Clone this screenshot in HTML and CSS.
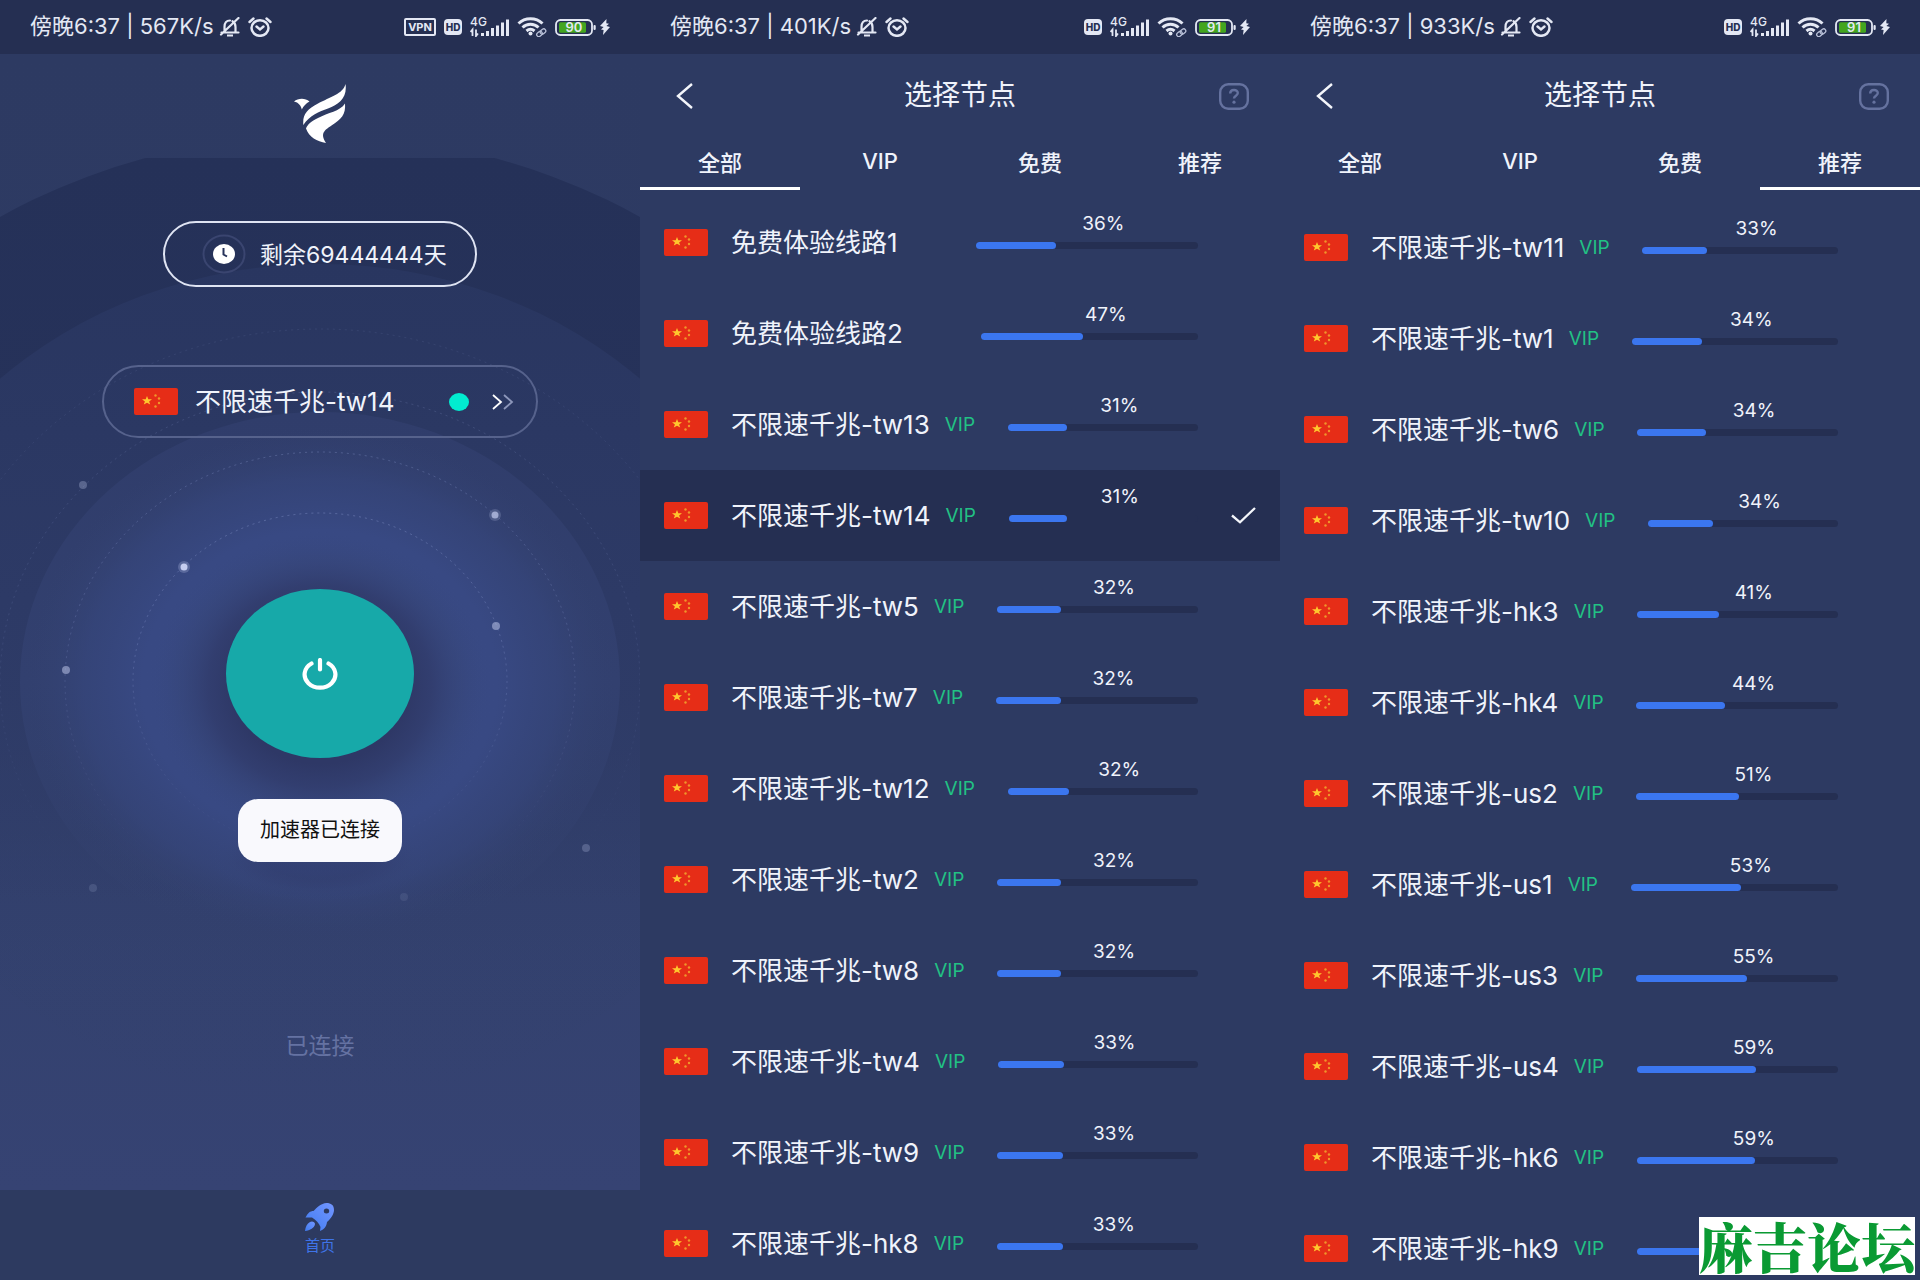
FILE: index.html
```html
<!DOCTYPE html>
<html lang="zh-CN">
<head>
<meta charset="utf-8">
<meta name="viewport" content="width=device-width, initial-scale=1">
<title>选择节点</title>
<link rel="stylesheet" href="styles.css">
</head>
<body>
<svg class="sprite" aria-hidden="true">
  <symbol id="flag" viewBox="0 0 44 27">
    <rect width="44" height="27" rx="2" fill="#e62d17"/>
    <path d="M13 8l1.300 3.200 3.700.1-2.900 2.100 1.100 3.200-3.200-1.900-3.200 1.900 1.100-3.200L8 11.300l3.700-.1z" fill="#ffc72e"/>
    <g fill="#f0962a"><circle cx="21.500" cy="7.500" r="1.200"/><circle cx="25" cy="10.500" r="1.200"/><circle cx="25" cy="15" r="1.200"/><circle cx="21.500" cy="18.500" r="1.200"/></g>
  </symbol>
  <symbol id="bell" viewBox="0 0 22 20">
    <path d="M2.500 15.500h17M5.500 15V10c0-4 2-6.500 5.500-6.500M13.500 4.200C15.600 5.300 16.500 7.400 16.500 10v5M19.500 1 2 17.500" fill="none" stroke="#e4e8f4" stroke-width="2.200" stroke-linecap="round"/>
    <path d="M8 18.500h6" stroke="#e4e8f4" stroke-width="2"/>
  </symbol>
  <symbol id="alarm" viewBox="0 0 24 20">
    <ellipse cx="12" cy="11" rx="8.500" ry="7.800" fill="none" stroke="#e4e8f4" stroke-width="2.500"/>
    <path d="M1.500 5 5.500 1.500M22.500 5l-4-3.500M8.500 9.500 12 12.500l3.500-3" fill="none" stroke="#e4e8f4" stroke-width="2.400" stroke-linecap="round"/>
  </symbol>
  <symbol id="signal" viewBox="0 0 39 20">
    <path d="M2.500 19v-6.500l-2 2.500M6 12.500v6.500l2-2.500" fill="none" stroke="#e4e8f4" stroke-width="1.800"/>
    <path d="M12.500 19v-3M17.500 19v-5M22.500 19v-8M27.500 19V8.500M32.500 19V5.500M37.500 19V2.500" stroke="#e4e8f4" stroke-width="3"/>
  </symbol>
  <symbol id="wifi" viewBox="0 0 30 20">
    <path d="M1.500 6.500C8 .2 19 .2 25.500 6.500M5.500 10.500c4.500-4.200 11.500-4.200 16 0M9.500 14c2.500-2.200 5.500-2.200 8 0" fill="none" stroke="#e4e8f4" stroke-width="3"/>
    <circle cx="13.500" cy="16.500" r="2" fill="#e4e8f4"/>
    <g fill="none" stroke="#b9c0d8" stroke-width="1.300"><rect x="19.500" y="15" width="6" height="4" rx="2" transform="rotate(-40 22.500 17)"/><rect x="23" y="12.500" width="6" height="4" rx="2" transform="rotate(-40 26 14.500)"/></g>
  </symbol>
  <symbol id="battery" viewBox="0 0 42 17">
    <rect x="1" y="1" width="36" height="15" rx="4.500" fill="none" stroke="#e4e8f4" stroke-width="1.800"/>
    <rect x="38.500" y="6" width="2.200" height="5" rx="1" fill="#e4e8f4"/>
    <rect x="4" y="3.200" width="27" height="10.600" rx="1.500" fill="#43a51f"/>
  </symbol>
  <symbol id="bolt" viewBox="0 0 10 16">
    <path d="M6.500 0 0 7l3.600 1L1 10.500l2.600.5L3 16l7-8-3.600-1L9 4.800 6.300 4.200z" fill="#e4e8f4"/>
  </symbol>
  <symbol id="back" viewBox="0 0 18 28">
    <path d="M16 2 2 14l14 12" fill="none" stroke="#f4f6fb" stroke-width="2.400"/>
  </symbol>
  <symbol id="help" viewBox="0 0 30 27">
    <rect x="1.200" y="1.200" width="27.600" height="24.600" rx="8" fill="none" stroke="#65729f" stroke-width="2.400"/>
    <path d="M11.200 10.500c0-4.600 7.600-4.600 7.600-.4 0 2.600-3.800 2.600-3.800 5.400" fill="none" stroke="#65729f" stroke-width="2.400"/>
    <circle cx="15" cy="19.200" r="1.600" fill="#65729f"/>
  </symbol>
  <symbol id="check" viewBox="0 0 25 17">
    <path d="M1 8.500 9 15.300 24 1" fill="none" stroke="#f4f6fb" stroke-width="2.300"/>
  </symbol>
</svg>

<div class="screens">
  <section class="phone home">
    <header class="status">
      <span class="status-text">傍晚6:37 | 567K/s</span>
      <svg class="bell"><use href="#bell"/></svg><svg class="alarm"><use href="#alarm"/></svg>
      <div class="status-icons">
        <b class="vpn">VPN</b><b class="hd">HD</b><span class="signal"><svg><use href="#signal"/></svg><i>4G</i></span><svg class="wifi"><use href="#wifi"/></svg>
        <span class="battery"><svg><use href="#battery"/></svg><b>90</b></span><svg class="bolt"><use href="#bolt"/></svg>
      </div>
    </header>
    <main class="stage">
      <svg class="sky" viewBox="0 54 640 1137" preserveAspectRatio="xMidYMin slice" aria-hidden="true">
        <defs>
          <linearGradient id="far" gradientUnits="userSpaceOnUse" x1="0" y1="158" x2="0" y2="900"><stop offset="0" stop-color="#253158"/><stop offset=".35" stop-color="#26325a"/><stop offset="1" stop-color="#26325a" stop-opacity="0"/></linearGradient>
          <linearGradient id="mid" gradientUnits="userSpaceOnUse" x1="0" y1="264" x2="0" y2="1100"><stop offset="0" stop-color="#293660"/><stop offset=".4" stop-color="#2d3a66"/><stop offset="1" stop-color="#34426f" stop-opacity="0"/></linearGradient>
          <linearGradient id="near" gradientUnits="userSpaceOnUse" x1="0" y1="412" x2="0" y2="952"><stop offset="0" stop-color="#303d6b"/><stop offset=".5" stop-color="#32406f"/><stop offset="1" stop-color="#34426f" stop-opacity="0"/></linearGradient>
          <linearGradient id="orbit" gradientUnits="userSpaceOnUse" x1="0" y1="400" x2="0" y2="860"><stop offset="0" stop-color="#9aa9de"/><stop offset=".5" stop-color="#8c9bd2" stop-opacity=".8"/><stop offset="1" stop-color="#8c9bd2" stop-opacity="0"/></linearGradient>
          <radialGradient id="glow"><stop offset="0" stop-color="#394a85"/><stop offset=".6" stop-color="#384983"/><stop offset=".8" stop-color="#36467c" stop-opacity=".7"/><stop offset="1" stop-color="#33416f" stop-opacity="0"/></radialGradient>
          <radialGradient id="shade"><stop offset=".5" stop-color="#2e3866"/><stop offset=".65" stop-color="#313c6c" stop-opacity=".85"/><stop offset=".82" stop-color="#354476" stop-opacity=".45"/><stop offset="1" stop-color="#384983" stop-opacity="0"/></radialGradient>
          <clipPath id="below"><rect x="0" y="158" width="640" height="1033"/></clipPath>
        </defs>
        <g clip-path="url(#below)">
          <ellipse cx="320" cy="682" rx="608" ry="547" fill="url(#far)"/>
          <ellipse cx="320" cy="682" rx="465" ry="418" fill="url(#mid)"/>
          <ellipse cx="320" cy="682" rx="300" ry="270" fill="url(#near)"/>
          <ellipse cx="320" cy="684" rx="296" ry="256" fill="url(#glow)"/>
          <ellipse cx="320" cy="686" rx="172" ry="156" fill="url(#shade)"/>
          <ellipse cx="320" cy="858" rx="110" ry="44" fill="url(#shade)" opacity=".35"/>
        </g>
        <g fill="none" stroke="url(#orbit)" stroke-dasharray="2 4">
          <ellipse cx="320" cy="681" rx="187" ry="168" opacity=".4"/>
          <ellipse cx="320" cy="682" rx="255" ry="230" opacity=".3"/>
          <ellipse cx="320" cy="682" rx="320" ry="290" opacity=".18"/>
          <ellipse cx="320" cy="682" rx="390" ry="353" opacity=".1"/>
        </g>
        <g fill="#c5cdf0">
          <circle cx="83" cy="485" r="4" opacity=".3"/>
          <circle cx="184" cy="567" r="6" opacity=".25"/><circle cx="184" cy="567" r="3.500"/>
          <circle cx="495" cy="515" r="6" opacity=".2"/><circle cx="495" cy="515" r="3.500" opacity=".7"/>
          <circle cx="496" cy="626" r="4" opacity=".5"/>
          <circle cx="66" cy="670" r="4" opacity=".5"/>
          <circle cx="93" cy="888" r="4" opacity=".15"/>
          <circle cx="404" cy="897" r="4" opacity=".1"/>
          <circle cx="586" cy="848" r="4" opacity=".25"/>
        </g>
      </svg>
      <svg class="logo" viewBox="0 0 52 59" role="img" aria-label="logo">
        <g fill="#fff"><path d="M0 17.500C4 14 11 13.500 15.500 17.500 12 19.500 9.500 22 7.800 25.500 7 21.500 4.500 18.500 0 17.500z"/>
        <path d="M51.500 0C49 10 36 13 24 19.500 13 25.500 8.500 30 9.300 41 16 31 25 27.500 34 24.500 45 20.500 53.500 13.500 51.500 0z"/>
        <path d="M51 19.500C46 27.500 34 28.500 24 34 17 37.500 13.500 40.500 12 44.500 15 53 23 57.500 32 59 26 49.500 30 46.500 37.500 41.500 47 35.500 52 30.500 51 19.500z"/></g>
      </svg>
      <button class="pill remaining" type="button">
        <svg class="clock" viewBox="0 0 44 40"><ellipse cx="22" cy="20" rx="20.500" ry="18.500" fill="none" stroke="#3a4570" stroke-width="2"/><ellipse cx="22" cy="20" rx="11" ry="10" fill="#fff"/><path d="M21.500 14v6.500l3.500 2" fill="none" stroke="#26325a" stroke-width="2"/></svg>
        <span class="caption">剩余69444444天</span>
      </button>
      <button class="pill current" type="button">
        <svg class="flag"><use href="#flag"/></svg>
        <span class="current-name">不限速千兆-tw14</span>
        <i class="online"></i>
        <svg class="more" viewBox="0 0 22 16"><path d="m1 1 8 7-8 7" fill="none" stroke="#fff" stroke-width="1.800"/><path d="m12 1 8 7-8 7" fill="none" stroke="#8d97bb" stroke-width="1.800"/></svg>
      </button>
      <button class="power" type="button" aria-label="断开连接">
        <svg viewBox="0 0 36 32"><path d="M9.500 5.500A15.400 13.200 0 1 0 26.500 5.500M18 2v9.500" fill="none" stroke="#fff" stroke-width="4.200" stroke-linecap="round"/></svg>
      </button>
      <div class="toast" role="status">加速器已连接</div>
      <p class="state">已连接</p>
    </main>
    <nav class="dock">
      <a href="#home">
        <svg viewBox="0 0 30 28"><defs><linearGradient id="rk" x1="1" y1="0" x2="0" y2="1"><stop offset="0" stop-color="#7396ff"/><stop offset="1" stop-color="#3f7bf0"/></linearGradient></defs>
        <path fill-rule="evenodd" fill="url(#rk)" d="M29 7C29 2 26 0 21.500 0 16 .3 12 4.500 8.500 8 5 8 3 10 .5 14.500L7 14.500C11 17 14 20 15.500 24l-.5 4c4.500-2 6.500-4.500 7-9C26 15.500 29 11 29 7zM21.500 5.500a2.600 2.400 0 1 1 0 5 2.600 2.400 0 0 1 0-5z"/>
        <path fill="url(#rk)" d="M5 19c2-1.500 5 0 5 2C9.500 25 5 27.500 0 28c.5-4 2-7.500 5-9z"/></svg>
        <span>首页</span>
      </a>
    </nav>
  </section>

  <section class="phone">
    <header class="status">
      <span class="status-text">傍晚6:37 | 401K/s</span>
      <svg class="bell"><use href="#bell"/></svg><svg class="alarm"><use href="#alarm"/></svg>
      <div class="status-icons">
        <b class="hd">HD</b><span class="signal"><svg><use href="#signal"/></svg><i>4G</i></span><svg class="wifi"><use href="#wifi"/></svg>
        <span class="battery"><svg><use href="#battery"/></svg><b>91</b></span><svg class="bolt"><use href="#bolt"/></svg>
      </div>
    </header>
    <div class="titlebar">
      <button type="button" class="back" aria-label="返回"><svg><use href="#back"/></svg></button>
      <h1>选择节点</h1>
      <button type="button" class="help" aria-label="帮助"><svg><use href="#help"/></svg></button>
    </div>
    <div class="tabs" role="tablist">
      <button type="button" role="tab" class="tab active" aria-selected="true">全部</button>
      <button type="button" role="tab" class="tab">VIP</button>
      <button type="button" role="tab" class="tab">免费</button>
      <button type="button" role="tab" class="tab">推荐</button>
    </div>
    <ul class="nodes">
      <li><button type="button" class="node"><svg class="flag"><use href="#flag"/></svg><span class="name">免费体验线路1</span><span class="tag"></span><span class="load"><span class="value">36%</span><span class="track"><span class="fill" style="width:36%"></span></span></span></button></li>
      <li><button type="button" class="node"><svg class="flag"><use href="#flag"/></svg><span class="name">免费体验线路2</span><span class="tag"></span><span class="load"><span class="value">47%</span><span class="track"><span class="fill" style="width:47%"></span></span></span></button></li>
      <li><button type="button" class="node"><svg class="flag"><use href="#flag"/></svg><span class="name">不限速千兆-tw13</span><span class="tag">VIP</span><span class="load"><span class="value">31%</span><span class="track"><span class="fill" style="width:31%"></span></span></span></button></li>
      <li><button type="button" class="node selected"><svg class="flag"><use href="#flag"/></svg><span class="name">不限速千兆-tw14</span><span class="tag">VIP</span><span class="load"><span class="value">31%</span><span class="track"><span class="fill" style="width:31%"></span></span></span><svg class="check"><use href="#check"/></svg></button></li>
      <li><button type="button" class="node"><svg class="flag"><use href="#flag"/></svg><span class="name">不限速千兆-tw5</span><span class="tag">VIP</span><span class="load"><span class="value">32%</span><span class="track"><span class="fill" style="width:32%"></span></span></span></button></li>
      <li><button type="button" class="node"><svg class="flag"><use href="#flag"/></svg><span class="name">不限速千兆-tw7</span><span class="tag">VIP</span><span class="load"><span class="value">32%</span><span class="track"><span class="fill" style="width:32%"></span></span></span></button></li>
      <li><button type="button" class="node"><svg class="flag"><use href="#flag"/></svg><span class="name">不限速千兆-tw12</span><span class="tag">VIP</span><span class="load"><span class="value">32%</span><span class="track"><span class="fill" style="width:32%"></span></span></span></button></li>
      <li><button type="button" class="node"><svg class="flag"><use href="#flag"/></svg><span class="name">不限速千兆-tw2</span><span class="tag">VIP</span><span class="load"><span class="value">32%</span><span class="track"><span class="fill" style="width:32%"></span></span></span></button></li>
      <li><button type="button" class="node"><svg class="flag"><use href="#flag"/></svg><span class="name">不限速千兆-tw8</span><span class="tag">VIP</span><span class="load"><span class="value">32%</span><span class="track"><span class="fill" style="width:32%"></span></span></span></button></li>
      <li><button type="button" class="node"><svg class="flag"><use href="#flag"/></svg><span class="name">不限速千兆-tw4</span><span class="tag">VIP</span><span class="load"><span class="value">33%</span><span class="track"><span class="fill" style="width:33%"></span></span></span></button></li>
      <li><button type="button" class="node"><svg class="flag"><use href="#flag"/></svg><span class="name">不限速千兆-tw9</span><span class="tag">VIP</span><span class="load"><span class="value">33%</span><span class="track"><span class="fill" style="width:33%"></span></span></span></button></li>
      <li><button type="button" class="node"><svg class="flag"><use href="#flag"/></svg><span class="name">不限速千兆-hk8</span><span class="tag">VIP</span><span class="load"><span class="value">33%</span><span class="track"><span class="fill" style="width:33%"></span></span></span></button></li>
    </ul>
  </section>

  <section class="phone">
    <header class="status">
      <span class="status-text">傍晚6:37 | 933K/s</span>
      <svg class="bell"><use href="#bell"/></svg><svg class="alarm"><use href="#alarm"/></svg>
      <div class="status-icons">
        <b class="hd">HD</b><span class="signal"><svg><use href="#signal"/></svg><i>4G</i></span><svg class="wifi"><use href="#wifi"/></svg>
        <span class="battery"><svg><use href="#battery"/></svg><b>91</b></span><svg class="bolt"><use href="#bolt"/></svg>
      </div>
    </header>
    <div class="titlebar">
      <button type="button" class="back" aria-label="返回"><svg><use href="#back"/></svg></button>
      <h1>选择节点</h1>
      <button type="button" class="help" aria-label="帮助"><svg><use href="#help"/></svg></button>
    </div>
    <div class="tabs" role="tablist">
      <button type="button" role="tab" class="tab">全部</button>
      <button type="button" role="tab" class="tab">VIP</button>
      <button type="button" role="tab" class="tab">免费</button>
      <button type="button" role="tab" class="tab active" aria-selected="true">推荐</button>
    </div>
    <ul class="nodes recommended">
      <li><button type="button" class="node"><svg class="flag"><use href="#flag"/></svg><span class="name">不限速千兆-tw11</span><span class="tag">VIP</span><span class="load"><span class="value">33%</span><span class="track"><span class="fill" style="width:33%"></span></span></span></button></li>
      <li><button type="button" class="node"><svg class="flag"><use href="#flag"/></svg><span class="name">不限速千兆-tw1</span><span class="tag">VIP</span><span class="load"><span class="value">34%</span><span class="track"><span class="fill" style="width:34%"></span></span></span></button></li>
      <li><button type="button" class="node"><svg class="flag"><use href="#flag"/></svg><span class="name">不限速千兆-tw6</span><span class="tag">VIP</span><span class="load"><span class="value">34%</span><span class="track"><span class="fill" style="width:34%"></span></span></span></button></li>
      <li><button type="button" class="node"><svg class="flag"><use href="#flag"/></svg><span class="name">不限速千兆-tw10</span><span class="tag">VIP</span><span class="load"><span class="value">34%</span><span class="track"><span class="fill" style="width:34%"></span></span></span></button></li>
      <li><button type="button" class="node"><svg class="flag"><use href="#flag"/></svg><span class="name">不限速千兆-hk3</span><span class="tag">VIP</span><span class="load"><span class="value">41%</span><span class="track"><span class="fill" style="width:41%"></span></span></span></button></li>
      <li><button type="button" class="node"><svg class="flag"><use href="#flag"/></svg><span class="name">不限速千兆-hk4</span><span class="tag">VIP</span><span class="load"><span class="value">44%</span><span class="track"><span class="fill" style="width:44%"></span></span></span></button></li>
      <li><button type="button" class="node"><svg class="flag"><use href="#flag"/></svg><span class="name">不限速千兆-us2</span><span class="tag">VIP</span><span class="load"><span class="value">51%</span><span class="track"><span class="fill" style="width:51%"></span></span></span></button></li>
      <li><button type="button" class="node"><svg class="flag"><use href="#flag"/></svg><span class="name">不限速千兆-us1</span><span class="tag">VIP</span><span class="load"><span class="value">53%</span><span class="track"><span class="fill" style="width:53%"></span></span></span></button></li>
      <li><button type="button" class="node"><svg class="flag"><use href="#flag"/></svg><span class="name">不限速千兆-us3</span><span class="tag">VIP</span><span class="load"><span class="value">55%</span><span class="track"><span class="fill" style="width:55%"></span></span></span></button></li>
      <li><button type="button" class="node"><svg class="flag"><use href="#flag"/></svg><span class="name">不限速千兆-us4</span><span class="tag">VIP</span><span class="load"><span class="value">59%</span><span class="track"><span class="fill" style="width:59%"></span></span></span></button></li>
      <li><button type="button" class="node"><svg class="flag"><use href="#flag"/></svg><span class="name">不限速千兆-hk6</span><span class="tag">VIP</span><span class="load"><span class="value">59%</span><span class="track"><span class="fill" style="width:59%"></span></span></span></button></li>
      <li><button type="button" class="node"><svg class="flag"><use href="#flag"/></svg><span class="name">不限速千兆-hk9</span><span class="tag">VIP</span><span class="load"><span class="track"><span class="fill" style="width:60%"></span></span></span></button></li>
    </ul>
    <div class="watermark">麻吉论坛</div>
  </section>
</div>
</body>
</html>
```
FILE: styles.css
```css
* { box-sizing: border-box; }

body {
  margin: 0;
  background: #2d3a62;
  color: #f0f3fb;
  font-family: Inter, "Noto Sans CJK SC", sans-serif;
}

button {
  margin: 0;
  padding: 0;
  border: 0;
  background: none;
  color: inherit;
  font: inherit;
  cursor: pointer;
}

svg { display: block; flex: none; }
.sprite { position: absolute; width: 0; height: 0; }

.screens {
  display: grid;
  grid-template-columns: repeat(3, minmax(0, 1fr));
  height: 100vh;
}

.phone {
  position: relative;
  display: flex;
  flex-direction: column;
  min-height: 0;
  overflow: hidden;
}

/* Status bar */
.status {
  display: flex;
  flex: none;
  align-items: center;
  height: 54px;
  padding: 0 30px;
  background: #252f52;
}
.status-text {
  margin-right: 5px;
  padding-bottom: 2px;
  color: #e4e8f4;
  font-size: 22px;
  line-height: 30px;
  white-space: nowrap;
}
.status-icons { display: flex; align-items: center; gap: 8px; margin-left: auto; color: #e4e8f4; }
.bell { width: 22px; height: 20px; }
.alarm { width: 24px; height: 20px; margin-left: 7px; }
.vpn {
  width: 32px;
  height: 18px;
  border: 2px solid #e4e8f4;
  border-radius: 2px;
  font-size: 11px;
  font-weight: 700;
  line-height: 14px;
  text-align: center;
}
.hd {
  width: 18px;
  height: 16px;
  border-radius: 4px;
  background: #e4e8f4;
  color: #252f52;
  font-size: 10px;
  font-weight: 800;
  line-height: 16px;
  text-align: center;
}
.signal { display: grid; }
.signal svg { grid-area: 1 / 1; width: 39px; height: 20px; }
.signal i {
  grid-area: 1 / 1;
  font-size: 12px;
  font-style: normal;
  font-weight: 500;
  line-height: 10px;
}
.wifi { width: 30px; height: 20px; }
.bolt { width: 10px; height: 16px; margin-left: -5px; }
.battery { display: grid; }
.battery svg { grid-area: 1 / 1; width: 42px; height: 17px; }
.battery b {
  grid-area: 1 / 1;
  width: 38px;
  font-size: 13px;
  font-weight: 600;
  line-height: 17px;
  text-align: center;
}

/* Home */
.stage {
  position: relative;
  display: flex;
  flex: 1;
  flex-direction: column;
  align-items: center;
  min-height: 0;
  padding-top: 30px;
  background: linear-gradient(#2d3a62 0%, #2e3b64 40%, #33416e 75%, #364373 100%);
}
.sky { position: absolute; inset: 0; width: 100%; height: 100%; }
.stage > :not(.sky) { position: relative; }
.logo { width: 52px; height: 59px; }

.pill { display: flex; flex: none; align-items: center; border-radius: 37px; }
.remaining {
  width: 314px;
  height: 66px;
  margin-top: 78px;
  padding-left: 37px;
  border: 2px solid #dfe4f3;
  font-size: 23px;
}
.clock { width: 44px; height: 40px; margin-right: 14px; }
.caption { padding-bottom: 3px; }
.current {
  width: 436px;
  height: 73px;
  margin-top: 78px;
  padding: 0 22px 0 30px;
  border: 2px solid #56628c;
  font-size: 26px;
}
.flag { width: 44px; height: 27px; }
.current-name { margin: 0 auto 0 17px; padding-bottom: 4px; }
.online { width: 20px; height: 18px; margin-right: 23px; border-radius: 50%; background: #02ecd0; }
.more { width: 22px; height: 16px; }

.power {
  display: grid;
  flex: none;
  place-items: center;
  width: 188px;
  height: 169px;
  margin-top: 151px;
  border-radius: 50%;
  background: #17a9a9;
}
.power svg { width: 36px; height: 32px; }

.toast {
  margin-top: 41px;
  padding: 16px 22px;
  border-radius: 20px;
  background: #f9f9fd;
  color: #111;
  font-size: 20px;
  line-height: 31px;
}
.state { margin: 168px 0 0; color: #6572a2; font-size: 23px; line-height: 32px; }

.dock { display: flex; flex: none; justify-content: center; height: 90px; background: #2d3a60; }
.dock a {
  display: flex;
  flex-direction: column;
  align-items: center;
  gap: 4px;
  padding-top: 13px;
  color: #3f74e8;
  font-size: 15px;
  line-height: 22px;
  text-decoration: none;
}
.dock svg { width: 30px; height: 28px; }

/* Node picker */
.titlebar {
  display: grid;
  flex: none;
  grid-template-columns: 30px 1fr 30px;
  align-items: center;
  height: 84px;
  padding: 0 31px;
}
.titlebar h1 { margin: 0; padding-bottom: 2px; font-size: 28px; font-weight: 400; text-align: center; line-height: 40px; }
.back svg { width: 18px; height: 28px; margin-left: 5px; }
.help svg { width: 30px; height: 27px; }

.tabs { display: grid; flex: none; grid-template-columns: repeat(4, 1fr); height: 52px; }
.tab { padding-bottom: 4px; border-bottom: 3px solid transparent; font-size: 22px; font-weight: 500; }
.tab.active { border-color: #fff; }

.nodes { flex: 1; min-height: 0; margin: 0; padding: 7px 0 0; overflow: hidden; list-style: none; }
.nodes.recommended { padding-top: 12px; }
.node { display: flex; align-items: center; width: 100%; height: 91px; padding: 0 24px; text-align: left; }
.name { margin-left: 23px; padding-bottom: 4px; font-size: 26px; white-space: nowrap; }
.tag { min-width: 32px; margin-left: 15px; color: #22c184; font-size: 19px; }
.load {
  display: flex;
  flex: 1;
  flex-direction: column;
  align-self: stretch;
  justify-content: flex-end;
  gap: 6px;
  margin: 0 58px 39px 31px;
}
.value { padding-left: 33px; font-size: 19px; line-height: 24px; text-align: center; }
.track { height: 7px; border-radius: 4px; background: #252f52; }
.fill { display: block; height: 100%; border-radius: 4px; background: #3b76ef; }
.selected { background: #252f52; }
.selected .load { margin-right: 33px; }
.check { width: 25px; height: 17px; }

.watermark {
  position: absolute;
  right: 5px;
  bottom: 5px;
  background: #fff;
  color: #0a9a33;
  font-family: "Noto Serif CJK SC", "Noto Sans CJK SC", serif;
  font-size: 54px;
  font-weight: 900;
  line-height: 58px;
}
```
